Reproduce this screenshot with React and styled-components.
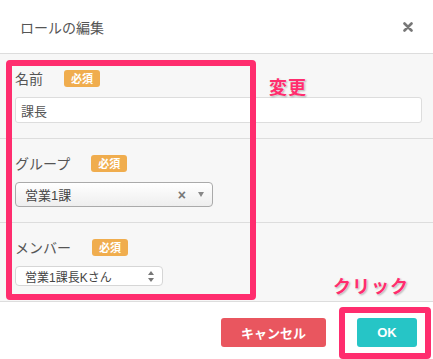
import React from 'react';
import styled, { createGlobalStyle } from 'styled-components';

const GlobalStyle = createGlobalStyle`
  body {
    margin: 0;
    background: #ffffff;
    font-family: "Liberation Sans", "Noto Sans CJK JP", sans-serif;
  }
`;

const Dialog = styled.div`
  position: relative;
  width: 433px;
  height: 359px;
  overflow: hidden;
  background: #ffffff;
`;

const Header = styled.div`
  display: flex;
  align-items: center;
  justify-content: space-between;
  height: 54px;
  padding: 0 20px;
  border-bottom: 1px solid #dddddd;
  box-sizing: border-box;
`;

const Title = styled.div`
  font-size: 14px;
  color: #555555;
`;

const Close = styled.svg`
  width: 10px;
  height: 10px;
`;

const Body = styled.div`
  background: #f7f7f7;
`;

const Section = styled.div`
  padding: 15px 11px 15px 15px;
  border-bottom: 1px solid #dddddd;
`;

const LabelRow = styled.div`
  display: flex;
  align-items: center;
  gap: 21px;
  height: 18px;
  margin-bottom: 10px;
`;

const Label = styled.span`
  font-size: 14px;
  color: #555555;
`;

const Badge = styled.span`
  display: inline-flex;
  align-items: center;
  justify-content: center;
  width: 36px;
  height: 17px;
  border-radius: 3px;
  background: #f0ad4e;
  color: #ffffff;
  font-size: 11px;
  font-weight: bold;
`;

const TextInput = styled.div`
  display: flex;
  align-items: center;
  height: 26px;
  padding: 0 5px;
  border: 1px solid #dddddd;
  border-radius: 3px;
  background: #ffffff;
  box-sizing: border-box;
  font-size: 13px;
  color: #555555;
`;

const Select = styled.div`
  display: flex;
  align-items: center;
  width: ${p => p.$width}px;
  height: ${p => p.$height}px;
  padding: 0 8px 0 9px;
  border: 1px solid ${p => (p.$flat ? '#d6d6d6' : '#aaaaaa')};
  border-radius: 4px;
  box-sizing: border-box;
  background: ${p => (p.$flat ? '#ffffff' : 'linear-gradient(#ffffff, #eeeeee)')};
  font-size: ${p => (p.$flat ? 12 : 13)}px;
  color: #444444;
`;

const Value = styled.span`
  flex: 1;
`;

const Clear = styled.span`
  font-size: 14px;
  font-weight: bold;
  color: #777777;
  margin-right: 12px;
`;

const Caret = styled.span`
  width: 0;
  height: 0;
  border-left: 3px solid transparent;
  border-right: 3px solid transparent;
  border-top: 5px solid #888888;
`;

const Footer = styled.div`
  display: flex;
  justify-content: flex-end;
  gap: 31px;
  padding: 16px 16px 0 0;
`;

const Button = styled.button`
  height: 29px;
  width: ${p => p.$width}px;
  border: none;
  border-radius: 3px;
  background: ${p => p.$color};
  color: #ffffff;
  font-family: inherit;
  font-size: 13px;
  font-weight: bold;
`;

const Mark = styled.div`
  position: absolute;
  left: ${p => p.$x}px;
  top: ${p => p.$y}px;
  width: ${p => p.$w}px;
  height: ${p => p.$h}px;
  border: 6px solid #ff2d6e;
  border-radius: 4px;
  box-sizing: border-box;
`;

const Note = styled.div`
  position: absolute;
  left: ${p => p.$x}px;
  top: ${p => p.$y}px;
  font-size: 18px;
  font-weight: bold;
  color: #ff2d6e;
  letter-spacing: 1px;
  text-shadow: 0 0 2px #ffffff, 1px 1px 2px rgba(0, 0, 0, 0.35);
`;

function Field({ label, children }) {
  return (
    <Section>
      <LabelRow>
        <Label>{label}</Label>
        <Badge>必須</Badge>
      </LabelRow>
      {children}
    </Section>
  );
}

export default function App() {
  return (
    <Dialog>
      <GlobalStyle />
      <Header>
        <Title>ロールの編集</Title>
        <Close viewBox="0 0 10 10">
          <path d="M1.5 1.5 L8.5 8.5 M8.5 1.5 L1.5 8.5" stroke="#777777" strokeWidth="2.6" strokeLinecap="round" />
        </Close>
      </Header>
      <Body>
        <Field label="名前">
          <TextInput>課長</TextInput>
        </Field>
        <Field label="グループ">
          <Select $width={198} $height={25}>
            <Value>営業1課</Value>
            <Clear>×</Clear>
            <Caret />
          </Select>
        </Field>
        <Field label="メンバー">
          <Select $flat $width={148} $height={20}>
            <Value>営業1課長Kさん</Value>
            <svg width="6" height="11" viewBox="0 0 6 11">
              <path d="M0 4 L3 0 L6 4 Z M0 7 L3 11 L6 7 Z" fill="#777777" />
            </svg>
          </Select>
        </Field>
      </Body>
      <Footer>
        <Button $width={105} $color="#e9565f">キャンセル</Button>
        <Button $width={60} $color="#26c5c6">OK</Button>
      </Footer>
      <Mark $x={6} $y={60} $w={250} $h={240} />
      <Mark $x={339} $y={307} $w={92} $h={52} />
      <Note $x={269} $y={73}>変更</Note>
      <Note $x={333} $y={272}>クリック</Note>
    </Dialog>
  );
}
